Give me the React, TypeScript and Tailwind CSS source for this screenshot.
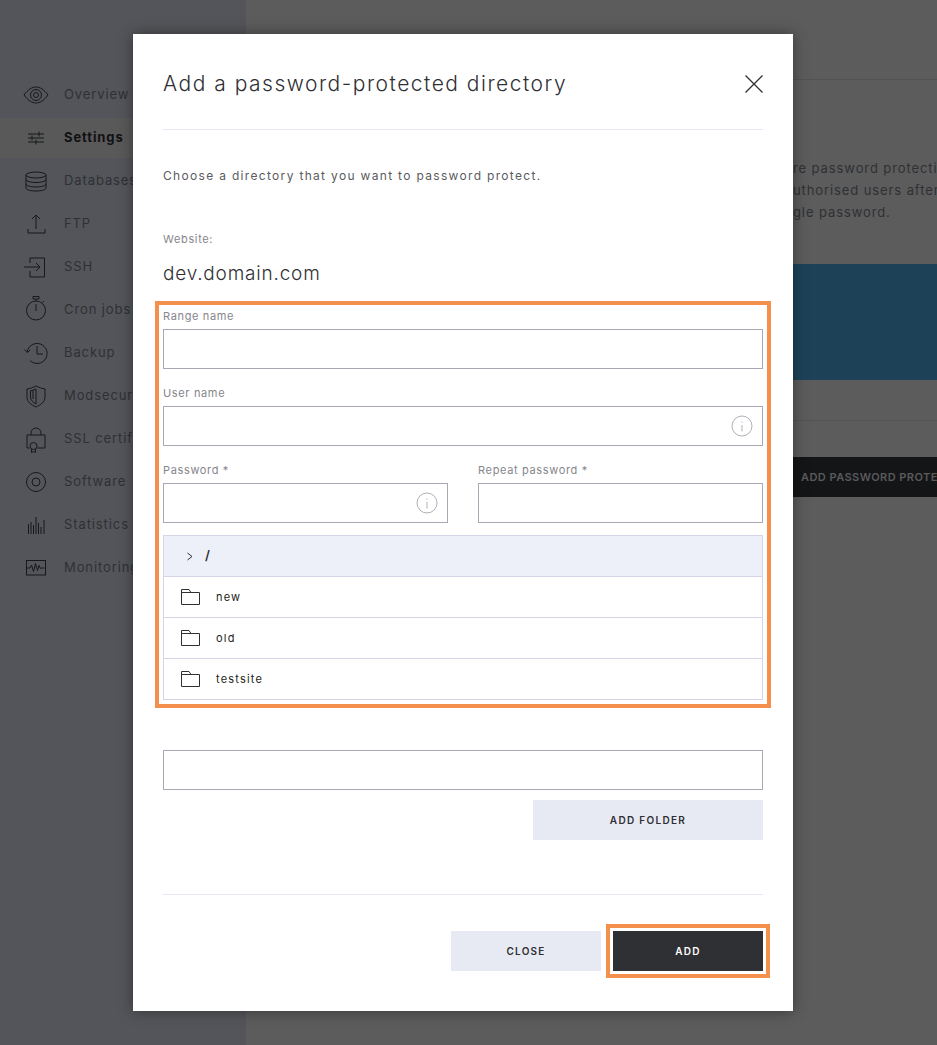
import { ReactNode } from 'react'

const font = 'font-["Inter","Liberation_Sans",sans-serif]'

function NavIcon({ children }: { children: ReactNode }) {
  return (
    <svg width="28" height="28" viewBox="0 0 28 28" fill="none" stroke="currentColor" strokeWidth="1">
      {children}
    </svg>
  )
}

const navItems: { label: string; icon: ReactNode; active?: boolean }[] = [
  {
    label: 'Overview',
    icon: (
      <NavIcon>
        <path d="M2 14C6 8.5 10 6 14 6s8 2.5 12 8c-4 5.5-8 8-12 8s-8-2.5-12-8Z" />
        <circle cx="14" cy="14" r="5.5" />
        <circle cx="14" cy="14" r="2.5" />
      </NavIcon>
    ),
  },
  {
    label: 'Settings',
    active: true,
    icon: (
      <NavIcon>
        <path d="M6 10h16M6 14h16M6 18h16M17 7.5v5M10 11.5v5M14 15.5v5" />
      </NavIcon>
    ),
  },
  {
    label: 'Databases',
    icon: (
      <NavIcon>
        <ellipse cx="14" cy="8" rx="10" ry="3" />
        <path d="M4 8v13c0 1.7 4.5 3 10 3s10-1.300 10-3V8M4 12.500c0 1.700 4.500 3 10 3s10-1.300 10-3M4 17c0 1.700 4.500 3 10 3s10-1.300 10-3" />
      </NavIcon>
    ),
  },
  {
    label: 'FTP',
    icon: (
      <NavIcon>
        <path d="M14 5v14M10 9l4-4 4 4M6 19v4h17v-4" />
      </NavIcon>
    ),
  },
  {
    label: 'SSH',
    icon: (
      <NavIcon>
        <path d="M8 10V5h14.500v19H8v-6M2 14h16M14 10l4 4-4 4" />
      </NavIcon>
    ),
  },
  {
    label: 'Cron jobs',
    icon: (
      <NavIcon>
        <circle cx="14" cy="14.500" r="9.500" />
        <path d="M11 .5h6v2.500h-6ZM14 3v2M14 8v7M20.500 6.500l1.500-1.500" />
      </NavIcon>
    ),
  },
  {
    label: 'Backup',
    icon: (
      <NavIcon>
        <path d="M5.200 13a10 10 0 1 1 2.800 8.500M2.500 10.500l2.700 3 3-2.500M15 7v8h6" />
      </NavIcon>
    ),
  },
  {
    label: 'Modsecurity',
    icon: (
      <NavIcon>
        <path d="M14 4c3 1.500 6 2.500 9 3v8c0 5-4.500 8-9 10-4.500-2-9-5-9-10V7c3-.5 6-1.500 9-3Z" />
        <path d="M14 7c-1.700.8-3.400 1.400-5.500 1.800V15c0 3 2.500 5.500 5.500 7ZM11 8.500V17" />
      </NavIcon>
    ),
  },
  {
    label: 'SSL certificates',
    icon: (
      <NavIcon>
        <path d="M9 10V8a5 5 0 0 1 10 0v2M7.500 23H5V10h18v13h-7.500" />
        <circle cx="11.500" cy="21" r="3.500" />
        <path d="M9.500 24v3.500l2-1 2 1V24" />
      </NavIcon>
    ),
  },
  {
    label: 'Software',
    icon: (
      <NavIcon>
        <circle cx="14" cy="14" r="9.500" />
        <circle cx="14" cy="14" r="4" />
      </NavIcon>
    ),
  },
  {
    label: 'Statistics',
    icon: (
      <NavIcon>
        <path d="M6.500 23V13M9 23V11M11.500 23V14M14 23V6M16.500 23V12M19 23V16M22 23V9" />
      </NavIcon>
    ),
  },
  {
    label: 'Monitoring',
    icon: (
      <NavIcon>
        <rect x="4.500" y="6.500" width="19" height="14.500" />
        <path d="M5 14h3l1.500-3 2 6.500 2-8 2 7 1.500-5 1.500 3 1-.5h3" />
      </NavIcon>
    ),
  },
]

function InfoIcon() {
  return (
    <svg width="22" height="22" viewBox="0 0 22 22" fill="none" stroke="currentColor" strokeWidth="1">
      <circle cx="11" cy="11" r="10" />
      <path d="M11 10v6.500M11 6.500v1.200" />
    </svg>
  )
}

function Field({ label, info, className = '' }: { label: string; info?: boolean; className?: string }) {
  return (
    <div className={`flex flex-col ${className}`}>
      <label className="h-[23px] pt-[3px] text-[11px] leading-[15px] tracking-[0.65px] text-[#85868c]">{label}</label>
      <div className="flex h-10 items-center justify-end border border-[#a9a9b6] pr-[9px] text-[#b0b1b8]">
        {info && <InfoIcon />}
      </div>
    </div>
  )
}

function TreeRow({ name }: { name: string }) {
  return (
    <div className="flex h-[41px] items-center border-t border-[#d3d6e6] pl-[17px]">
      <svg width="19" height="16" viewBox="0 0 19 16" fill="none" stroke="#2f3034" strokeWidth="1">
        <path d="M.5 15.500V.5H8L10 3.500H18.500V15.500ZM.5 3.500H10" />
      </svg>
      <span className="ml-4 text-[11px] tracking-[1.2px] text-[#1d1e20]">{name}</span>
    </div>
  )
}

export default function App() {
  return (
    <div className={`relative h-[1045px] w-[937px] overflow-hidden bg-[#5c5c5c] ${font}`}>
      <div className="flex h-full">
        <aside className="flex h-full w-[246px] shrink-0 flex-col bg-[#54555a] pt-[75px]">
          {navItems.map((item) => (
            <div
              key={item.label}
              className={`mb-[3px] flex h-10 items-center ${item.active ? 'bg-[#59595a] font-bold text-[#111114]' : 'text-[#2f3034]'}`}
            >
              <span className="flex w-[72px] shrink-0 justify-center text-[#17181a]">{item.icon}</span>
              <span className="-ml-2 text-[13px] tracking-[0.9px]">{item.label}</span>
            </div>
          ))}
        </aside>
        <main className="flex-1">
          <div className="h-20 border-b border-[#535353]" />
          <div className="ml-[547px] mt-[77px] w-[400px] whitespace-nowrap text-[13px] leading-[22px] tracking-[0.9px] text-[#2f3034]">
            <p>re password protection</p>
            <p>uthorised users after</p>
            <p>gle password.</p>
          </div>
          <div className="mt-[41px] h-[116px] bg-[#1d4258]" />
          <div className="mt-10 border-t border-[#535353]" />
          <div className="ml-[547px] mt-9 flex h-10 items-center whitespace-nowrap bg-[#141517] pl-2 text-[11px] font-semibold tracking-[0.45px] text-[#5a5a5c]">
            ADD PASSWORD PROTECTION
          </div>
        </main>
      </div>

      <div className="absolute left-[133px] top-[34px] flex h-[977px] w-[660px] flex-col bg-white px-[30px] shadow-[0_0_14px_rgba(0,0,0,0.4)]">
        <div className="flex h-[96px] items-center justify-between border-b border-[#e6e7f0] pt-1">
          <h1 className="text-[21px] font-light tracking-[1.5px] text-[#2f3034]">Add a password-protected directory</h1>
          <svg width="18" height="18" viewBox="0 0 18 18" fill="none" stroke="#2f3034" strokeWidth="1.300" className="mt-[1px]">
            <path d="M.5 .5l17 17M17.500 .5l-17 17" />
          </svg>
        </div>
        <p className="mt-[38px] text-[12px] leading-4 tracking-[1.32px] text-[#5a5b60]">Choose a directory that you want to password protect.</p>
        <p className="mt-[47px] text-[11px] leading-4 tracking-[0.65px] text-[#85868c]">Website:</p>
        <p className="mt-[15px] text-[19px] font-light leading-6 tracking-[0.8px] text-[#2f3034]">dev.domain.com</p>

        <div className="-mx-2 mt-[15px] border-4 border-[#f58f4c] px-1 pb-1 pt-px">
          <Field label="Range name" />
          <Field label="User name" info className="mt-[14px]" />
          <div className="mt-[14px] flex gap-[30px]">
            <Field label="Password *" info className="flex-1" />
            <Field label="Repeat password *" className="flex-1" />
          </div>
          <div className="mt-3 border border-t-0 border-[#d3d6e6]">
            <div className="flex h-[41px] items-center border-t border-[#d3d6e6] bg-[#edf0f9] pl-[23px] text-[#2f3034]">
              <svg width="6" height="9" viewBox="0 0 6 9" fill="none" stroke="currentColor" strokeWidth="1">
                <path d="M.5 1L5 4.500L.5 8" />
              </svg>
              <span className="ml-3 text-[13px] font-semibold">/</span>
            </div>
            <TreeRow name="new" />
            <TreeRow name="old" />
            <TreeRow name="testsite" />
          </div>
        </div>

        <div className="mt-[42px] h-10 border border-[#a9a9b6]" />
        <div className="mt-[10px] flex justify-end">
          <button className="h-10 w-[230px] bg-[#e8eaf3] text-[10px] font-semibold tracking-[1.3px] text-[#2f3034]">ADD FOLDER</button>
        </div>

        <div className="mt-[54px] border-t border-[#e6e7f0]" />
        <div className="mt-[29px] flex justify-end">
          <button className="mt-[7px] h-10 w-[150px] bg-[#e8eaf3] text-[10px] font-semibold tracking-[1.2px] text-[#2f3034]">CLOSE</button>
          <div className="-mr-[7px] ml-[5px] border-4 border-[#f58f4c] p-[3px]">
            <button className="block h-10 w-[150px] bg-[#2f3034] text-[10px] font-semibold tracking-[1.2px] text-white">ADD</button>
          </div>
        </div>
      </div>
    </div>
  )
}
